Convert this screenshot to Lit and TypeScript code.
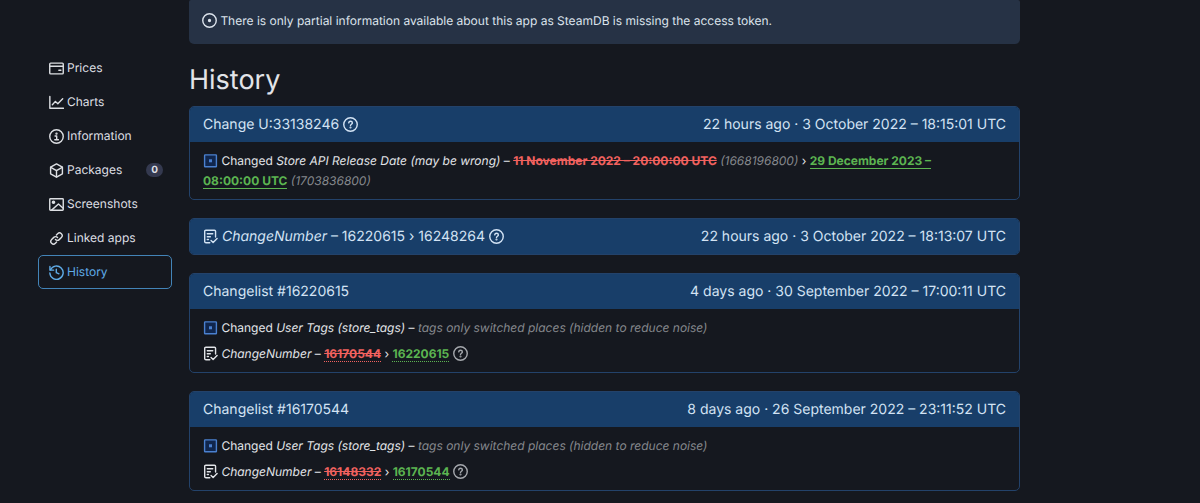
import { LitElement, html, css, svg, nothing, TemplateResult } from "lit";
import { customElement, property } from "lit/decorators.js";
import { classMap } from "lit/directives/class-map.js";

const icons: Record<string, unknown> = {
  prices: svg`<rect x="0.8" y="2.3" width="14.4" height="11.4" rx="1"/><path d="M1 5.6h14"/><path d="M10.5 9.9h2.2"/>`,
  charts: svg`<path d="M0.9 1.5v12.7h14.6"/><path d="M3.6 10.4l3.2-3.6 2.6 2.6 5.2-5.4"/>`,
  info: svg`<circle cx="8" cy="8" r="7.2"/><path d="M6.5 7.5h1.7v3.9M6.2 11.4h3.8"/><circle cx="8" cy="4.9" r="0.5" fill="currentColor"/>`,
  packages: svg`<path d="M8 0.9l6.3 3.6v7L8 15.1l-6.3-3.6v-7z"/><path d="M1.9 4.6L8 8.1l6.1-3.5M8 8.1v6.8"/>`,
  image: svg`<rect x="0.8" y="1.8" width="14.4" height="12.4" rx="0.8"/><circle cx="4.8" cy="5.6" r="1.2" fill="currentColor"/><path d="M2.8 14l7.3-6.6 5 4.6"/>`,
  link: svg`<path d="M6.9 9.1a2.8 2.8 0 0 0 4 .1l2.3-2.3a2.8 2.8 0 0 0-4-4L7.9 4.2"/><path d="M9.1 6.9a2.8 2.8 0 0 0-4-.1L2.8 9.1a2.8 2.8 0 0 0 4 4l1.3-1.3"/>`,
  history: svg`<path d="M1.5 5.3A7.1 7.1 0 1 1 0.9 8.6"/><path d="M1 1.6v3.9h3.9"/><path d="M7.8 4.6v3.6l2.8 1.2"/>`,
  dot: svg`<circle cx="8" cy="8" r="7.2"/><circle cx="8" cy="8" r="1" fill="currentColor"/>`,
  question: svg`<circle cx="8" cy="8" r="7.2"/><path d="M6.1 6.3c.2-1.2 1-1.7 1.9-1.7 1.1 0 2 .7 2 1.7 0 1.4-2 1.5-2 2.8"/><circle cx="8" cy="11.2" r="0.4" fill="currentColor"/>`,
  modified: svg`<rect x="1.7" y="2" width="12.6" height="12.6" rx="0.6" fill="#10264d"/><rect x="6.4" y="6.7" width="3.2" height="3.2" fill="currentColor" stroke="none"/>`,
  checklist: svg`<path d="M7.2 14.6H3.2a1.4 1.4 0 0 1-1.4-1.4V2.5a1.2 1.2 0 0 1 1.2-1.2h9.2a1.2 1.2 0 0 1 1.2 1.2v6"/><path d="M4.6 5h5.8M4.600 8.200h3.200M4.600 11.200h1.200"/><path d="M8.600 12.200l2.200 2.300 4.200-4.300"/>`,
};

const icon = (name: string, extra = "") =>
  html`<svg class="icon ${extra}" viewBox="0 0 16 16" aria-hidden="true">${icons[name]}</svg>`;

const iconStyles = css`
  .icon {
    width: 15px;
    height: 15px;
    fill: none;
    stroke: currentColor;
    stroke-width: 1.5;
    stroke-linecap: round;
    stroke-linejoin: round;
    vertical-align: -3px;
    flex: none;
  }
`;

@customElement("app-nav")
class AppNav extends LitElement {
  static styles = [
    iconStyles,
    css`
      :host { display: block; }
      .list { display: flex; flex-direction: column; margin: 0; padding: 0; list-style: none; }
      .item {
        box-sizing: border-box;
        display: flex;
        align-items: center;
        gap: 3px;
        height: 34px;
        padding: 0 10px;
        border: 1px solid transparent;
        border-radius: 5px;
        color: #dddfe3;
        text-decoration: none;
      }
      .current { border-color: #4384b8; color: #5fabe6; }
      .count {
        margin-left: auto;
        margin-right: -2px;
        padding: 0 5px;
        border-radius: 7px;
        background: #34394f;
        font-size: 10px;
        line-height: 14px;
        font-weight: 700;
      }
    `,
  ];

  private links = [
    { icon: "prices", label: "Prices" },
    { icon: "charts", label: "Charts" },
    { icon: "info", label: "Information" },
    { icon: "packages", label: "Packages", count: 0 },
    { icon: "image", label: "Screenshots" },
    { icon: "link", label: "Linked apps" },
    { icon: "history", label: "History", current: true },
  ];

  render() {
    return html`<nav aria-label="App sections"><ul class="list">
      ${this.links.map(
        (l) => html`<li><a href="#" class=${classMap({ item: true, current: !!l.current })}
          aria-current=${l.current ? "page" : nothing}
          >${icon(l.icon)}<span>${l.label}</span>${l.count === undefined ? nothing : html`<span class="count">${l.count}</span>`}</a></li>`
      )}
    </ul></nav>`;
  }
}

@customElement("history-card")
class HistoryCard extends LitElement {
  static styles = [
    iconStyles,
    css`
      :host {
        display: block;
        border: 1px solid #23426a;
        border-radius: 5px;
        overflow: hidden;
      }
      .head {
        display: flex;
        justify-content: space-between;
        align-items: center;
        padding: 0 13px;
        background: #183e69;
        color: #d3e3f4;
        font-size: 14px;
        line-height: 35px;
      }
      .rows {
        display: flex;
        flex-direction: column;
        gap: 6px;
        margin: 0;
        padding: 9px 13px 8px;
        list-style: none;
      }
      .modified { color: #4a80cf; }
      .help { color: #a5a8ad; }
      .note { color: #85888d; font-style: italic; }
      .old { color: #f2625f; font-weight: 700; }
      .new { color: #5cb551; font-weight: 700; text-decoration: none; border-bottom: 1px solid #5cb551; }
      .hint { border-bottom: 1px dotted currentColor; }
    `,
  ];

  @property({ attribute: false }) heading: TemplateResult | string = "";
  @property() when = "";
  @property({ attribute: false }) rows: TemplateResult[] = [];

  render() {
    return html`
      <div class="head"><span>${this.heading}</span><time>${this.when}</time></div>
      ${this.rows.length ? html`<ul class="rows">${this.rows.map((r) => html`<li>${r}</li>`)}</ul>` : nothing}
    `;
  }
}

const tagRow = html`${icon("modified", "modified")} Changed <i>User Tags (store_tags)</i> – <span class="note">tags only switched places (hidden to reduce noise)</span>`;

const numberRow = (from: string, to: string) =>
  html`${icon("checklist")} <i>ChangeNumber</i> – <del class="old hint">${from}</del> › <ins class="new hint">${to}</ins> ${icon("question", "help")}`;

@customElement("app-root")
class AppRoot extends LitElement {
  static styles = [
    iconStyles,
    css`
      :host {
        display: block;
        min-height: 100vh;
        background: #15181f;
        color: #e2e4e8;
        font: 12px/20px Inter, "Liberation Sans", sans-serif;
        text-rendering: geometricPrecision;
      }
      .page {
        display: grid;
        grid-template-columns: 134px minmax(0, 1fr);
        gap: 17px;
        padding: 0 15% 11px 38px;
      }
      .side { padding-top: 51px; }
      .notice {
        padding: 11px 13px 13px;
        border-radius: 2px 2px 5px 5px;
        background: #263245;
        color: #dce3ec;
      }
      .title { margin: 16px 0 6px; font-size: 27px; line-height: 40px; font-weight: 400; }
      .cards { display: flex; flex-direction: column; gap: 18px; }
    `,
  ];

  render() {
    return html`<div class="page">
      <app-nav class="side"></app-nav>
      <main>
        <div class="notice" role="note">${icon("dot")} There is only partial information available about this app as SteamDB is missing the access token.</div>
        <h1 class="title">History</h1>
        <div class="cards">
          <history-card
            .heading=${html`Change U:33138246 ${icon("question")}`}
            when="22 hours ago · 3 October 2022 – 18:15:01 UTC"
            .rows=${[html`${icon("modified", "modified")} Changed <i>Store API Release Date (may be wrong)</i> – <del class="old">11 November 2022 – 20:00:00 UTC</del> <span class="note">(1668196800)</span> › <ins class="new">29 December 2023 – 08:00:00&nbsp;UTC</ins> <span class="note">(1703836800)</span>`]}
          ></history-card>
          <history-card
            .heading=${html`${icon("checklist")} <i>ChangeNumber</i> – 16220615 › 16248264 ${icon("question")}`}
            when="22 hours ago · 3 October 2022 – 18:13:07 UTC"
          ></history-card>
          <history-card
            .heading=${"Changelist #16220615"}
            when="4 days ago · 30 September 2022 – 17:00:11 UTC"
            .rows=${[tagRow, numberRow("16170544", "16220615")]}
          ></history-card>
          <history-card
            .heading=${"Changelist #16170544"}
            when="8 days ago · 26 September 2022 – 23:11:52 UTC"
            .rows=${[tagRow, numberRow("16148332", "16170544")]}
          ></history-card>
        </div>
      </main>
    </div>`;
  }
}
